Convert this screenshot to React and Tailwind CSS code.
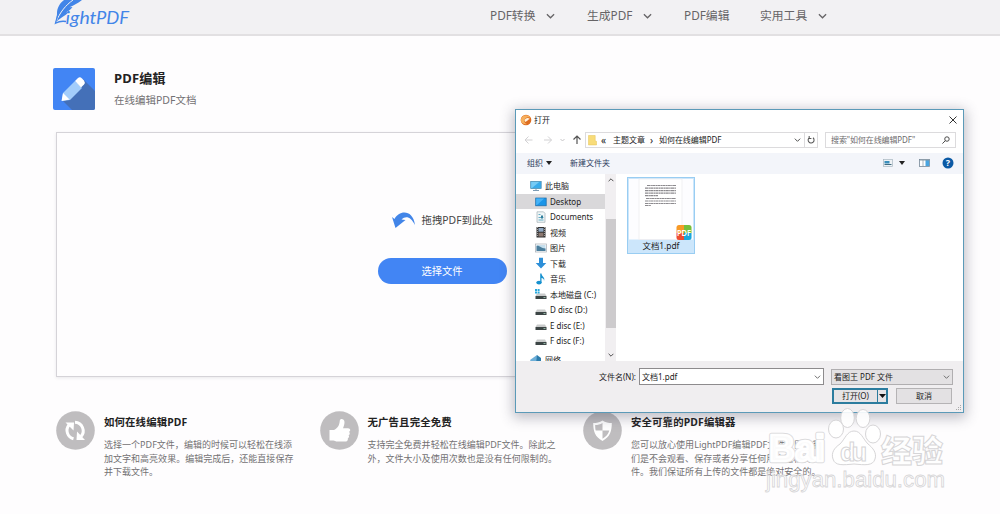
import clsx from "clsx";

const navItems = [
  { label: "PDF转换", menu: true, width: "w-[97px]" },
  { label: "生成PDF", menu: true, width: "w-[97px]" },
  { label: "PDF编辑", menu: false, width: "w-[76px]" },
  { label: "实用工具", menu: true, width: "w-[80px]" },
];

const features = [
  {
    icon: "sync",
    title: "如何在线编辑PDF",
    lines: ["选择一个PDF文件，编辑的时候可以轻松在线添", "加文字和高亮效果。编辑完成后，还能直接保存", "并下载文件。"],
  },
  {
    icon: "like",
    title: "无广告且完全免费",
    lines: ["支持完全免费并轻松在线编辑PDF文件。除此之", "外，文件大小及使用次数也是没有任何限制的。"],
  },
  {
    icon: "shield",
    title: "安全可靠的PDF编辑器",
    lines: ["您可以放心使用LightPDF编辑PDF文件，因为我", "们是不会观看、保存或者分享任何用户隐私文", "件。我们保证所有上传的文件都是绝对安全的。"],
  },
];

const places = [
  { icon: "desktop", label: "Desktop", active: true },
  { icon: "doc", label: "Documents" },
  { icon: "video", label: "视频" },
  { icon: "picture", label: "图片" },
  { icon: "download", label: "下载" },
  { icon: "music", label: "音乐" },
  { icon: "system", label: "本地磁盘 (C:)" },
  { icon: "disk", label: "D disc (D:)" },
  { icon: "disk", label: "E disc (E:)" },
  { icon: "disk", label: "F disc (F:)" },
];

function Chevron({ className, up }) {
  return (
    <svg viewBox="0 0 10 6" className={className} fill="none" stroke="currentColor" strokeWidth="1.400">
      <path d={up ? "M1 5 5 1l4 4" : "M1 1l4 4 4-4"} />
    </svg>
  );
}

function Logo() {
  return (
    <svg viewBox="0 0 80 35" className="ml-[53px] h-[35px] w-[80px] shrink-0">
      <path d="M11 0C7 3 4 8 4 13c0 3-.5 6-1.500 9.500C7 18 12 16 16 12l-3 .3c3-1.300 5-3 6.500-5.300l-3 .2C21 5.500 25 3 29 0Z" fill="#4285e8" />
      <path d="M20 0C13 5 7 12 3 22" fill="none" stroke="#f2f1f3" strokeWidth="1" />
      <path d="M5 14C4 18 3 21 2.500 23.200c3-1.700 6-2.400 10.500-1.700" fill="none" stroke="#4285e8" strokeWidth="1.300" />
      <g fontFamily="Lato" fontStyle="italic" fontSize="18" fontWeight="400" fill="#4285e8">
        <text x="12.500" y="24" textLength="31" lengthAdjust="spacingAndGlyphs">
          ight
        </text>
        <text x="43" y="24" textLength="33" lengthAdjust="spacingAndGlyphs">
          PDF
        </text>
      </g>
    </svg>
  );
}

function PencilIcon() {
  return (
    <svg viewBox="0 0 42 42" className="h-[42px] w-[42px] shrink-0">
      <rect width="42" height="42" rx="2" fill="#4285f4" />
      <path d="M30 11 42 23v17a2 2 0 0 1-2 2H19L9 32Z" fill="#4470b8" />
      <path d="M10 25 22 13l7 7-12 12-8 1Z" fill="#a3cdfb" />
      <path d="m22 13 3-3q2-1.500 4 .5l2 2q1.500 2 0 4l-3 3Z" fill="#fff" />
      <path d="m10 25-1.500 8 8-1.500Z" fill="#fff" />
    </svg>
  );
}

function FeatureIcon({ name }) {
  return (
    <svg viewBox="0 0 39 39" className="h-[39px] w-[39px] shrink-0">
      <circle cx="19.500" cy="19.500" r="19.300" fill="#bfbdbf" />
      {name === "sync" && (
        <g>
          <path d="M17.500 27.800A8.600 8.600 0 0 1 13 14" fill="none" stroke="#fff" strokeWidth="3" />
          <path d="M9.500 11.500h8.500l-.5 8Z" fill="#fff" />
          <path d="M19 11.200A8.600 8.600 0 0 1 25 25.500" fill="none" stroke="#fff" strokeWidth="3" />
          <path d="M29 29h-8.500l.5-8.500Z" fill="#fff" />
        </g>
      )}
      {name === "like" && (
        <path
          d="M9.500 19h4.500c4-2 5.500-5 5.800-9.500.2-2.500 4.700-2 4.700 1.500 0 2.300-.7 4-1.500 6.200H28c2.800 0 2.800 3 1 3.600 1.300 1 .9 3-.4 3.500.9 1.200.3 2.700-.8 3.100.5 2-.8 3.200-2.800 3.200H17.500c-2 0-3-1.100-4-1.100h-4Z"
          fill="#fff"
        />
      )}
      {name === "shield" && (
        <g>
          <path d="M19.500 9.500c3 2 6 2.600 9.300 2.600 0 8-1.800 14-9.300 17.900-7.500-3.900-9.300-9.900-9.300-17.900 3.300 0 6.300-.6 9.300-2.600Z" fill="#fff" />
          <path d="M19.500 12v7.500H12.700c-.5-1.800-.5-3.500-.5-5.500 2.700 0 5-.6 7.300-2ZM19.500 19.500h6.800c-1 3.600-3.200 6.300-6.800 8.200Z" fill="#bfbdbf" />
        </g>
      )}
    </svg>
  );
}

function PlaceIcon({ name }) {
  return (
    <svg viewBox="0 0 12 12" className="h-[12px] w-[12px] shrink-0">
      {name === "desktop" && (
        <g>
          <rect x="0.700" y="2" width="10.500" height="7.800" fill="#1b95e8" stroke="#1a6ba8" strokeWidth="0.700" />
          <path d="M1.200 2.500h8L2 9H1.200Z" fill="#45b2f6" />
        </g>
      )}
      {name === "pc" && (
        <g>
          <rect x="0.700" y="1.500" width="10.500" height="7" fill="#3aabea" stroke="#4788ad" strokeWidth="0.700" />
          <path d="M1.200 2h8L2 8H1.200Z" fill="#77cbf5" />
          <path d="M3 10.500h6M6 8.500v2" stroke="#7c9bb3" />
        </g>
      )}
      {name === "doc" && (
        <g>
          <path d="M2 .8h6.500l1.500 1.500v9H2Z" fill="#f0f6f7" stroke="#93a3aa" strokeWidth="0.600" />
          <path d="M3.500 3.500h2M3.500 6.500h5M3.500 9h5" stroke="#64adc5" />
          <path d="M6 4.500h2v3h-2Z" fill="#317e9c" />
        </g>
      )}
      {name === "video" && (
        <g>
          <rect x="1.500" y="1" width="9" height="10.500" fill="#333" />
          <path d="M3.500 2h5v3.700h-5Z" fill="#90a9c4" />
          <path d="M3.500 6.700h5v3.800h-5Z" fill="#8b7870" />
          <path d="M2.500 1v10M9.500 1v10" stroke="#ccc" strokeWidth="0.700" strokeDasharray="1 1" />
        </g>
      )}
      {name === "picture" && (
        <g>
          <rect x="0.500" y="2" width="11" height="8" fill="#fff" stroke="#a4acb4" strokeWidth="0.700" />
          <path d="M1.500 3h9v5.500h-9Z" fill="#c5dfed" />
          <path d="M1.500 4c3-1 4 2.500 9 2.500V9h-9Z" fill="#4a7e9c" />
        </g>
      )}
      {name === "download" && <path d="M4 .8h4v5.200h3.300L6 11.500.7 6H4Z" fill="#2d8fd8" />}
      {name === "music" && (
        <g fill="#1791cf">
          <ellipse cx="4" cy="9.600" rx="2.700" ry="1.900" />
          <path d="M5.200.5h1.300C6.600 3.500 10.500 4 9 8c0-2.500-1-2.800-2.500-3v4.800H5.200Z" />
        </g>
      )}
      {(name === "disk" || name === "system") && (
        <g>
          <path d="M2 5.500h8l1.500 2.500H.5Z" fill="#c9cbcb" />
          <rect x="0.500" y="8" width="11" height="3" fill="#3c4545" />
          <path d="M8.500 9.500h2" stroke="#b5e2cd" strokeWidth="0.700" />
          {name === "system" && <path d="M0 1h2v2H0ZM2.600 1h2v2h-2ZM0 3.500h2v2H0ZM2.600 3.500h2v2h-2Z" fill="#28a9dd" />}
        </g>
      )}
      {name === "network" && (
        <g>
          <path d="M0 6 7 1v9H2Z" fill="#6dafd8" />
          <path d="m7 1 4 3v6H6Z" fill="#2c7cac" />
        </g>
      )}
    </svg>
  );
}

function AddressBar() {
  return (
    <div className="flex h-[16px] items-center">
      <svg viewBox="0 0 60 16" className="ml-[8px] h-[16px] w-[60px]" fill="none">
        <path d="M8.500 8H1m3.500-3.500L1 8l3.500 3.500M20 8h7.500M24 4.500 27.500 8 24 11.500" stroke="#d2d1d3" />
        <path d="m36.500 7 2 2 2-2" stroke="#c8c7c9" />
        <path d="M53 12V4m-3.500 3.500L53 4l3.500 3.500" stroke="#555" strokeWidth="1.200" />
      </svg>
      <div className="ml-[1px] flex h-[16px] w-[233px] items-center border border-[#dcdbdd]">
        <svg viewBox="0 0 10 12" className="ml-[2px] h-[12px] w-[9px]">
          <path d="M.5 1H8v6l1.500.5V11.500H.5Z" fill="#f8dc79" stroke="#e5c65c" strokeWidth="0.600" />
        </svg>
        <span className="ml-[4px] w-[12px] text-[10px] leading-none">«</span>
        <span className="w-[37px]">主题文章</span>
        <span className="w-[9px] text-[10px] leading-none">›</span>
        <span className="tracking-[-0.05px]">如何在线编辑PDF</span>
        <Chevron className="mr-[3px] ml-auto h-[4px] w-[7px] text-[#444]" />
        <div className="flex h-full w-[13px] items-center justify-center border-l border-[#dcdbdd]">
          <svg viewBox="0 0 10 10" className="h-[8px] w-[8px]" fill="none" stroke="#555" strokeWidth="1.300">
            <path d="M7.500 2.200A3.700 3.700 0 1 1 3 2M2.700 0v3H5.500" />
          </svg>
        </div>
      </div>
      <div className="ml-[7px] flex h-[16px] w-[131px] items-center border border-[#dcdbdd] pr-[5px] pl-[5px] text-[#6d6b6d]">
        <span className="tracking-[-0.1px]">搜索"如何在线编辑PDF"</span>
        <svg viewBox="0 0 10 10" className="ml-auto h-[8px] w-[8px]" fill="none" stroke="#444" strokeWidth="1.200">
          <circle cx="6.200" cy="3.800" r="2.800" />
          <path d="M4.200 5.800.5 9.500" />
        </svg>
      </div>
    </div>
  );
}

function Toolbar() {
  return (
    <div className="mt-[5px] flex h-[21px] items-center bg-[#f3f5fa] pb-[2px] text-[#2b3b5c]">
      <span className="ml-[11px]">组织</span>
      <svg viewBox="0 0 6 4" className="ml-[3px] h-[4px] w-[6px]">
        <path d="M0 0h6L3 4Z" fill="#222" />
      </svg>
      <span className="ml-[18px]">新建文件夹</span>
      <div className="mr-[9px] ml-auto flex items-center">
        <svg viewBox="0 0 10 8" className="h-[8px] w-[10px]">
          <rect x="0.500" y="0.500" width="9" height="7" fill="#eef2f5" stroke="#a9b7c1" strokeWidth="0.700" />
          <path d="M1.500 2h5v2.500h-5Z" fill="#3b8fbc" />
          <path d="M1.500 5.500h7" stroke="#406a80" />
        </svg>
        <svg viewBox="0 0 6 4" className="ml-[6px] h-[4px] w-[6px]">
          <path d="M0 0h6L3 4Z" fill="#222" />
        </svg>
        <svg viewBox="0 0 11 8" className="ml-[14px] h-[8px] w-[11px]">
          <rect x="0.500" y="0.500" width="10" height="7" fill="#fff" stroke="#768898" strokeWidth="0.800" />
          <path d="M6.500 1h3.700v6h-3.700Z" fill="#4aa5e0" />
          <path d="M.5 1.200h10M4 1v6.500" stroke="#8798a5" strokeWidth="0.700" />
        </svg>
        <svg viewBox="0 0 12 12" className="ml-[12px] h-[12px] w-[12px]">
          <circle cx="6" cy="6" r="5.500" fill="#0b5aa5" />
          <text x="6" y="9.200" textAnchor="middle" fontSize="9" fontWeight="700" fill="#fff">
            ?
          </text>
        </svg>
      </div>
    </div>
  );
}

function FileTile() {
  return (
    <div className="mt-[3px] ml-[11px] flex h-[77px] w-[68px] flex-col items-center border border-[#99cdf2] bg-[#cce6fb]">
      <svg viewBox="0 0 66 63" className="h-[63px] w-[66px] shrink-0">
        <rect x="1" y="1" width="64" height="60.500" fill="#fdfdff" />
        <rect x="11" y="1" width="43" height="60.500" fill="#fff" stroke="#eceaee" strokeWidth="0.700" />
        <path
          d="M19 7.500h29M17 10.200h31M17 12.700h31M17 15.200h31M17 17.700h13M18 20.500h30M17 23h31M17 25.500h31M17 27.500h6"
          stroke="#8c8a8e"
          strokeWidth="1.200"
          strokeDasharray="3 .4 1.500 .3"
        />
        <clipPath id="badge">
          <rect x="48.500" y="47" width="15" height="15" rx="2.500" />
        </clipPath>
        <g clipPath="url(#badge)">
          <path d="M48 47h8v8h-8Z" fill="#f79a27" />
          <path d="M56 47h8v8h-8Z" fill="#75bf3b" />
          <path d="M48 55h8v8h-8Z" fill="#ee4c2f" />
          <path d="M56 55h8v8h-8Z" fill="#19a6db" />
        </g>
        <text x="56" y="57.500" textAnchor="middle" fontSize="8.500" fontWeight="600" fill="#fff" textLength="14" lengthAdjust="spacingAndGlyphs">
          PDF
        </text>
      </svg>
      <span className="text-[8.400px] leading-[10px]">文档1.pdf</span>
    </div>
  );
}

function OpenDialog() {
  return (
    <div className="absolute top-[109px] left-[515px] flex h-[304px] w-[449px] flex-col border border-[#5b9ab8] bg-white text-[8px] leading-[10px] text-[#222] shadow-[0_3px_12px_2px_rgba(60,60,80,0.32)]">
      <div className="flex h-[22px] shrink-0 items-center pb-[3px]">
        <svg viewBox="0 0 12 12" className="ml-[4px] h-[12px] w-[12px]">
          <circle cx="6" cy="6" r="5.300" fill="#dd6c20" />
          <path d="M1 5C2 1 8-.5 11 4 8 2.500 5.500 3 4.500 6 4 8 5 9.500 7 10 3 11 0 8.500 1 5Z" fill="#f6b05d" />
          <path d="M4.500 6.500C5 4 8 3 10 5 8.500 5 7.500 7 5.500 8Z" fill="#fff3dc" />
        </svg>
        <span className="ml-[2px]">打开</span>
        <svg viewBox="0 0 8 8" className="mr-[6px] ml-auto h-[8px] w-[8px]" stroke="#333">
          <path d="m.5.5 7 7m0-7-7 7" />
        </svg>
      </div>
      <AddressBar />
      <Toolbar />
      <div className="flex h-[187px] shrink-0">
        <div className="h-[187px] w-[89px] overflow-hidden pt-[4.400px]">
          <div className="flex h-[15.4px] items-center gap-[3px] pl-[14px]">
            <PlaceIcon name="pc" />
            <span>此电脑</span>
          </div>
          {places.map((p) => (
            <div
              key={p.label}
              className={clsx("flex h-[15.450px] items-center gap-[3px] pl-[19px] whitespace-nowrap", p.active && "bg-[#d9d8da]")}
            >
              <PlaceIcon name={p.icon} />
              <span className="pt-[1px]">{p.label}</span>
            </div>
          ))}
          <div className="mt-[4px] flex h-[15.4px] items-center gap-[3px] pl-[14px]">
            <PlaceIcon name="network" />
            <span>网络</span>
          </div>
        </div>
        <div className="flex w-[11px] flex-col items-center bg-[#f1eff1] py-[4px] text-[#333]">
          <Chevron up className="h-[4px] w-[6px]" />
          <div className="mt-[37px] h-[109px] w-[10px] bg-[#cdcbcd]" />
          <Chevron className="mt-auto h-[4px] w-[6px]" />
        </div>
        <FileTile />
      </div>
      <div className="relative flex grow flex-col bg-[#f0eef0] pt-[7px]">
        <div className="flex h-[17px] items-center">
          <span className="w-[123px] pr-[3px] text-right">文件名(N):</span>
          <div className="flex h-[17px] w-[185px] items-center border border-[#8d8b8d] bg-white pr-[2px] pl-[2px]">
            <span>文档1.pdf</span>
            <Chevron className="ml-auto h-[4px] w-[7px] text-[#666]" />
          </div>
          <div className="ml-[7px] flex h-[16px] w-[122px] items-center border border-[#b0aeb0] bg-[#e3e1e3] pr-[2px] pl-[2px]">
            <span>看图王 PDF 文件</span>
            <Chevron className="ml-auto h-[4px] w-[7px] text-[#666]" />
          </div>
        </div>
        <div className="mt-[3px] flex h-[16px]">
          <div className="ml-[316px] flex w-[56px] items-center border-2 border-[#2c7c9e] bg-[#e6e4e6]">
            <span className="grow text-center">打开(O)</span>
            <div className="flex h-full w-[9px] items-center justify-center border-l border-[#2c7c9e]">
              <svg viewBox="0 0 7 4" className="h-[4px] w-[7px]">
                <path d="M0 0h7L3.500 4Z" fill="#111" />
              </svg>
            </div>
          </div>
          <div className="ml-[8px] flex w-[56px] items-center justify-center border border-[#b5b3b5] bg-[#e3e1e3]">取消</div>
        </div>
        <svg viewBox="0 0 6 6" className="absolute right-[1px] bottom-[1px] h-[6px] w-[6px]">
          <path d="M4 0h1v1H4ZM2 2h1v1H2ZM4 2h1v1H4ZM0 4h1v1H0ZM2 4h1v1H2ZM4 4h1v1H4Z" fill="#aaa" />
        </svg>
      </div>
    </div>
  );
}

function Watermark() {
  return (
    <svg
      viewBox="0 0 190 110"
      className="pointer-events-none absolute top-[404px] left-[760px] h-[110px] w-[190px]"
      fill="#fff"
      fillOpacity="0.9"
      stroke="#d6d5d7"
      strokeWidth="1"
      fontFamily="Liberation Sans, Noto Sans CJK SC, sans-serif"
    >
      <g stroke="#dcdbdd" strokeWidth="4.500" strokeLinejoin="round">
        <text x="9" y="57" fontSize="36" fontWeight="700" textLength="56" lengthAdjust="spacingAndGlyphs">
          Bai
        </text>
      </g>
      <g stroke="#fff" strokeWidth="2.500" strokeLinejoin="round">
        <text x="9" y="57" fontSize="36" fontWeight="700" textLength="56" lengthAdjust="spacingAndGlyphs" aria-hidden="true">
          Bai
        </text>
      </g>
      <ellipse cx="76" cy="25" rx="7.500" ry="9" />
      <ellipse cx="87.500" cy="14" rx="6.800" ry="9.500" />
      <ellipse cx="103" cy="14.500" rx="6.800" ry="9" />
      <ellipse cx="113" cy="30" rx="7.500" ry="9" />
      <path d="M94 27c7 0 9 8 14 13 5 4 9 9 7 15-2 7-10 6-21 5-11 1-19 2-21-5-2-6 1-11 7-15 5-5 7-13 14-13Z" />
      <text x="80" y="57" fontSize="25" fontWeight="700" textLength="27">
        du
      </text>
      <text x="121" y="58" fontSize="31" fontWeight="900" textLength="62">
        经验
      </text>
      <text x="6" y="83" fontSize="22" strokeWidth="0.800" textLength="179" lengthAdjust="spacingAndGlyphs">
        jingyan.baidu.com
      </text>
    </svg>
  );
}

export default function App() {
  return (
    <div className="relative h-[514px] w-[1000px] overflow-hidden bg-[#fefdfe] font-['Noto_Sans','Noto_Sans_CJK_SC',sans-serif]">
      <header className="flex h-[36px] border-b-2 border-[#e2e0e2] bg-[#f2f1f3]">
        <Logo />
        <nav className="ml-[357px] flex h-[31px] items-center text-[11.8px] text-[#666466]">
          {navItems.map((item) => (
            <div key={item.label} className={clsx("flex shrink-0 items-center gap-[11px] whitespace-nowrap", item.width)}>
              <span>{item.label}</span>
              {item.menu && <Chevron className="h-[6px] w-[9px] shrink-0" />}
            </div>
          ))}
        </nav>
      </header>

      <main className="px-[56px]">
        <div className="mt-[32px] -ml-[3px] flex items-center">
          <PencilIcon />
          <div className="ml-[19px]">
            <h1 className="text-[13px] leading-[20px] font-bold tracking-[0.2px] text-[#222]">PDF编辑</h1>
            <p className="mt-[2px] text-[10.5px] leading-[20px] text-[#737173]">在线编辑PDF文档</p>
          </div>
        </div>

        <div className="mt-[22px] flex h-[245px] flex-col border border-[#d5d3d8] pt-[78px] pl-[320.5px] shadow-[0_1px_3px_rgba(80,80,100,0.12)]">
          <div className="flex h-[18px] items-center pl-[14px]">
            <svg viewBox="0 0 24 18" className="h-[18px] w-[24px]">
              <path d="M0 6 2.500 8C7-1 21-2 23 14 19 6 14 4 9.500 8.500l4 .5L3.500 17Z" fill="#4285e8" />
            </svg>
            <span className="ml-[6px] pt-[1px] text-[10.4px] text-[#444]">拖拽PDF到此处</span>
          </div>
          <button className="mt-[29px] h-[26px] w-[129px] rounded-full bg-[#4285f4] pt-[1px] text-[10.3px] text-white">选择文件</button>
        </div>

        <div className="mt-[34px] flex">
          {features.map((f) => (
            <section key={f.icon} className="flex w-[263.5px] shrink-0">
              <FeatureIcon name={f.icon} />
              <div className="ml-[9px] whitespace-nowrap">
                <h2 className="pt-px text-[10.4px] leading-[20px] font-bold tracking-[0.15px] text-[#222]">{f.title}</h2>
                <p className="mt-[6px] text-[9px] leading-[13.6px] tracking-[0.02px] text-[#737173]">
                  {f.lines.map((line) => (
                    <span key={line} className="block">
                      {line}
                    </span>
                  ))}
                </p>
              </div>
            </section>
          ))}
        </div>
      </main>

      <OpenDialog />
      <Watermark />
    </div>
  );
}
